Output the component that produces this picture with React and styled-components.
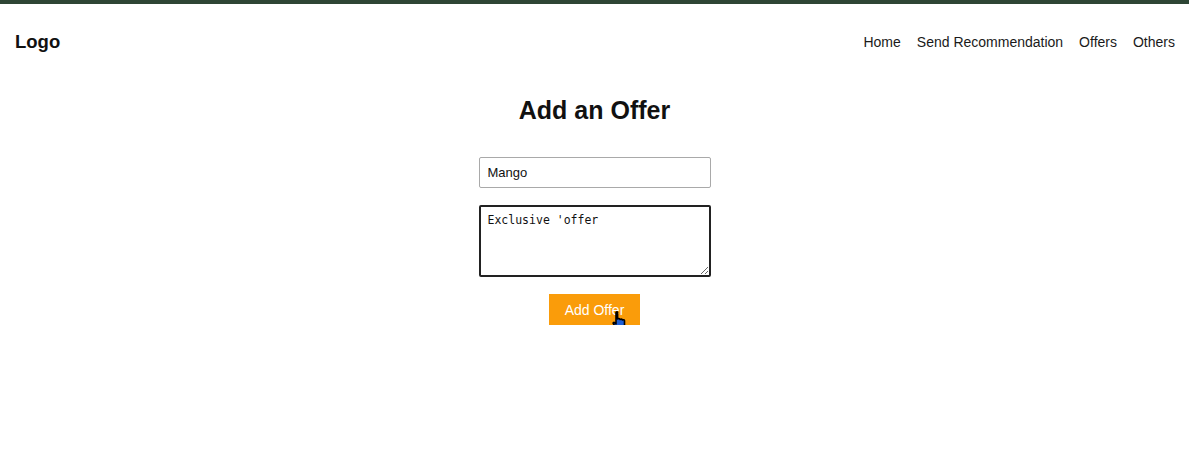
import styled, { createGlobalStyle } from 'styled-components';

const GlobalStyle = createGlobalStyle`
  body {
    margin: 0;
    background: #fff;
    font-family: "Liberation Sans", Arial, sans-serif;
    color: #111;
  }
`;

const Strip = styled.div`
  height: 4px;
  background: #2e4535;
`;

const Header = styled.header`
  display: flex;
  align-items: center;
  justify-content: space-between;
  height: 76px;
  padding: 0 14px 0 15px;
`;

const Logo = styled.div`
  font-size: 18.5px;
  font-weight: bold;
`;

const Nav = styled.nav`
  display: flex;
  gap: 16px;
`;

const NavLink = styled.a`
  font-size: 14px;
  color: #1a1a1a;
  text-decoration: none;
`;

const Main = styled.main`
  display: flex;
  flex-direction: column;
  align-items: center;
`;

const Title = styled.h1`
  margin: 15px 0 32px;
  font-size: 25px;
  line-height: 30px;
  font-weight: bold;
`;

const Form = styled.form`
  display: flex;
  flex-direction: column;
  align-items: center;
  gap: 17px;
`;

const Input = styled.input`
  box-sizing: border-box;
  width: 232px;
  height: 31px;
  padding: 0 8px;
  border: 1px solid #a9a9a9;
  border-radius: 2px;
  font-family: "Liberation Sans", Arial, sans-serif;
  font-size: 13px;
  color: #111;
  outline: none;
`;

const TextArea = styled.textarea`
  box-sizing: border-box;
  width: 232px;
  height: 72px;
  padding: 6px 7px;
  border: 2px solid #222;
  border-radius: 2px;
  font-family: "DejaVu Sans Mono", "Liberation Mono", monospace;
  font-size: 11.5px;
  color: #111;
  outline: none;
  resize: both;
`;

const ButtonWrap = styled.div`
  position: relative;
`;

const Button = styled.button`
  width: 91px;
  height: 31px;
  border: none;
  background: #fa9c0a;
  color: #fff;
  font-family: "Liberation Sans", Arial, sans-serif;
  font-size: 14px;
  cursor: pointer;
`;

const Cursor = styled.svg`
  position: absolute;
  left: 63px;
  top: 17px;
  z-index: 2;
  overflow: visible;
  pointer-events: none;
`;

export default function App() {
  return (
    <>
      <GlobalStyle />
      <Strip />
      <Header>
        <Logo>Logo</Logo>
        <Nav>
          <NavLink href="#">Home</NavLink>
          <NavLink href="#">Send Recommendation</NavLink>
          <NavLink href="#">Offers</NavLink>
          <NavLink href="#">Others</NavLink>
        </Nav>
      </Header>
      <Main>
        <Title>Add an Offer</Title>
        <Form onSubmit={(e) => e.preventDefault()}>
          <Input defaultValue="Mango" />
          <TextArea defaultValue="Exclusive 'offer" />
          <ButtonWrap>
            <Button type="submit">Add Offer</Button>
            <Cursor width="16" height="20" viewBox="0 0 16 20">
              <path
                d="M4 1.5c0-.8 1.6-.8 1.6 0V8l1-.4c.6-.2 1.2.2 1.3.6l.1.3 1-.3c.6-.1 1.1.3 1.2.7l1-.2c.7-.1 1.3.4 1.3 1.1v4.5c0 2-1.5 4.2-4 4.2H7c-1.5 0-2.6-.8-3.4-2L1.3 12.6c-.5-.8.5-1.7 1.3-1L4 13V1.5z"
                fill="#1f5fd6"
                stroke="#000"
                strokeWidth="1.6"
                strokeLinejoin="round"
              />
            </Cursor>
          </ButtonWrap>
        </Form>
      </Main>
    </>
  );
}
